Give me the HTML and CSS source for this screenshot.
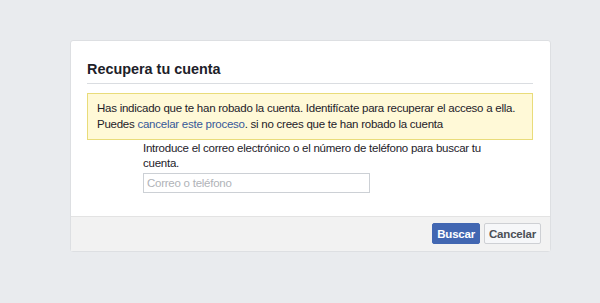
FILE: index.html
```html
<!DOCTYPE html>
<html lang="es">
<head>
  <meta charset="UTF-8" />
  <title>Recupera tu cuenta</title>
  <link rel="stylesheet" href="styles.css">
</head>
<body>
  <div class="card">
    <div class="card-header">
      <h2>Recupera tu cuenta</h2>
    </div>
    <div class="card-body">
      <div class="notice">
        Has indicado que te han robado la cuenta. Identifícate para recuperar el acceso a ella.
        Puedes <a href="#">cancelar este proceso</a>. si no crees que te han robado la cuenta
      </div>
      <div class="search">
        <p>Introduce el correo electrónico o el número de teléfono para buscar tu cuenta.</p>
        <input type="text" placeholder="Correo o teléfono">
      </div>
    </div>
    <div class="card-footer">
      <button class="btn btn-primary">Buscar</button>
      <button class="btn">Cancelar</button>
    </div>
  </div>
</body>
</html>
```

FILE: styles.css
```css
* {
  box-sizing: border-box;
  margin: 0;
  padding: 0;
}

body {
  font-family: 'Liberation Sans', Arial, sans-serif;
  font-size: 11.5px;
  letter-spacing: -0.25px;
  color: #1d2129;
  background: #e9ebee;
  padding-top: 40px;
}

/* === CARD === */
.card {
  width: 481px;
  height: 212px;
  margin-left: 70px;
  background: #fff;
  border: 1px solid #dddfe2;
  border-radius: 3px;
  display: flex;
  flex-direction: column;
}

.card-header {
  margin: 0 17px 0 16px;
  padding: 18px 0 4px;
  border-bottom: 1px solid #dadde1;
}

.card-header h2 {
  font-size: 14.4px;
  letter-spacing: 0;
  line-height: 20px;
  font-weight: bold;
  color: #1d2129;
}

.card-body {
  flex: 1;
  padding: 9px 17px 0 16px;
}

.notice {
  background: #fff9d7;
  border: 1px solid #e9dc7a;
  padding: 6px 9px 7px;
  line-height: 16px;
}

.notice a {
  color: #365899;
  text-decoration: none;
}

.search {
  padding-left: 56px;
}

.search p {
  width: 345px;
  line-height: 15px;
  padding-top: 1px;
}

.search input {
  display: block;
  margin-top: 2px;
  width: 227px;
  height: 20px;
  border: 1px solid #ccd0d5;
  padding: 0 3px;
  font-family: inherit;
  font-size: 11.5px;
  letter-spacing: -0.25px;
  color: #1d2129;
}

.search input::placeholder {
  color: #b0b3b8;
}

/* === FOOTER === */
.card-footer {
  height: 35px;
  background: #f2f2f2;
  border-top: 1px solid #e3e3e3;
  display: flex;
  justify-content: flex-end;
  align-items: flex-start;
  gap: 4px;
  padding: 6px 9px 0;
}

.btn {
  height: 21px;
  padding: 0 4px;
  font-family: inherit;
  font-size: 11.5px;
  letter-spacing: -0.2px;
  font-weight: bold;
  border: 1px solid #ced0d4;
  border-radius: 2px;
  background: #f6f7f9;
  color: #4b4f56;
  cursor: pointer;
}

.btn-primary {
  background: #4267b2;
  border-color: #4267b2;
  color: #fff;
}
```
